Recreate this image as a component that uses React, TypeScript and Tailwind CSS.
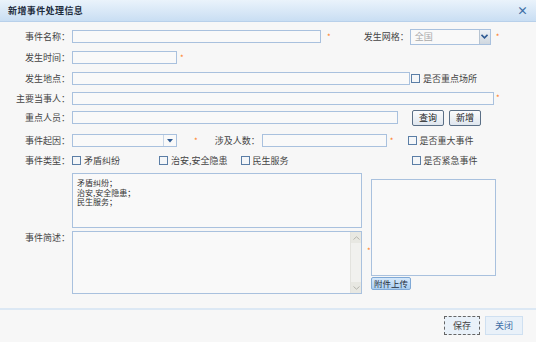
import React from 'react';

const font = { fontFamily: '"Noto Sans CJK SC", "Noto Sans", sans-serif' };

function Label({ text, w = 'w-[70px]' }: { text: string; w?: string }) {
  return <div className={`${w} shrink-0 whitespace-nowrap text-right text-[9px] leading-none text-[#444]`}>{text}</div>;
}

function Star({ className = '' }: { className?: string }) {
  return <span className={`text-[8px] leading-none text-[#ff7a1a] ${className}`}>*</span>;
}

function Box({ className = '' }: { className?: string }) {
  return <div className={`h-[13px] border border-[#a9c1de] bg-[#f9f9f9] ${className}`} />;
}

function Check({ text, className = '' }: { text: string; className?: string }) {
  return (
    <div className={`flex items-center ${className}`}>
      <span className="w-[9px] h-[9px] border border-[#5b7ea6] bg-[#f4f6f8]" />
      <span className="ml-[3px] whitespace-nowrap text-[9px] leading-none text-[#444]">{text}</span>
    </div>
  );
}

function Arrow() {
  return (
    <svg width="7" height="5" viewBox="0 0 7 5">
      <path d="M0.5 0.8 L3.5 3.8 L6.5 0.8" fill="none" stroke="#2f5b93" strokeWidth="1.6" />
    </svg>
  );
}

export default function App() {
  return (
    <div className="w-[536px] h-[342px] bg-[#f7f7f7] overflow-hidden" style={font}>
      {/* title bar */}
      <div className="h-[22px] flex items-center justify-between px-[8px] bg-gradient-to-b from-[#eaf3fb] to-[#c9def3] border-b border-[#b8d0ea]">
        <span className="text-[9px] font-bold text-[#1f2d3d] tracking-[0.4px]">新增事件处理信息</span>
        <span className="text-[11px] font-bold text-[#3d6da5] leading-none">×</span>
      </div>

      {/* row 1 */}
      <div className="h-[21px] mt-[4px] flex items-center">
        <Label text="事件名称：" />
        <Box className="ml-[2px] w-[249px]" />
        <Star className="ml-[6px]" />
        <Label text="发生网格：" w="w-[45px] ml-[33px]" />
        <div className="ml-[1px] w-[81px] h-[16px] flex border border-[#a9c1de] bg-[#f9f9f9]">
          <span className="flex-1 pl-[4px] text-[9px] leading-[14px] text-[#aaa]">全国</span>
          <span className="w-[11px] flex items-center justify-center bg-gradient-to-b from-[#eef2f6] to-[#cfd7df] border-l border-[#b7c4d2]">
            <Arrow />
          </span>
        </div>
        <Star className="ml-[5px]" />
      </div>

      {/* row 2 */}
      <div className="h-[21px] flex items-center">
        <Label text="发生时间：" />
        <Box className="ml-[2px] w-[105px]" />
        <Star className="ml-[3px]" />
      </div>

      {/* row 3 */}
      <div className="h-[20px] flex items-center">
        <Label text="发生地点：" />
        <Box className="ml-[2px] w-[338px]" />
        <Check text="是否重点场所" className="ml-[1px]" />
      </div>

      {/* row 4 */}
      <div className="h-[20px] flex items-center">
        <Label text="主要当事人：" />
        <Box className="ml-[2px] w-[422px]" />
        <Star className="ml-[2px]" />
      </div>

      {/* row 5 */}
      <div className="h-[19px] flex items-center">
        <Label text="重点人员：" />
        <Box className="ml-[2px] w-[326px]" />
        <button className="ml-[14px] w-[32px] h-[16px] rounded-[2px] border border-[#5b6f86] bg-gradient-to-b from-[#fbfcfd] to-[#dfe6ee] text-[9px] leading-none text-[#222]">查询</button>
        <button className="ml-[5px] w-[32px] h-[16px] rounded-[2px] border border-[#5b6f86] bg-gradient-to-b from-[#fbfcfd] to-[#dfe6ee] text-[9px] leading-none text-[#222]">新增</button>
      </div>

      {/* row 6 */}
      <div className="h-[27px] flex items-center">
        <Label text="事件起因：" />
        <div className="ml-[2px] w-[105px] h-[13px] flex border border-[#a9c1de] bg-[#f9f9f9]">
          <span className="flex-1" />
          <span className="w-[13px] flex items-center justify-center border-l border-[#c8d6e6]">
            <svg width="6" height="4" viewBox="0 0 6 4"><path d="M0 0 L6 0 L3 3.5 Z" fill="#2f5b93" /></svg>
          </span>
        </div>
        <Star className="ml-[17px]" />
        <Label text="涉及人数：" w="w-[45px] ml-[17px]" />
        <Box className="ml-[2px] w-[125px]" />
        <Star className="ml-[3px]" />
        <Check text="是否重大事件" className="ml-[14px]" />
      </div>

      {/* row 7 */}
      <div className="h-[12px] flex items-center">
        <Label text="事件类型：" />
        <Check text="矛盾纠纷" className="ml-[2px]" />
        <Check text="治安,安全隐患" className="ml-[39px]" />
        <Check text="民生服务" className="ml-[13px]" />
        <Check text="是否紧急事件" className="ml-[123px]" />
      </div>

      {/* text areas + attachment */}
      <div className="flex mt-[7px]">
        <div className="w-[70px] shrink-0 pt-[60px]">
          <Label text="事件简述：" />
        </div>
        <div className="ml-[2px] w-[290px] flex flex-col gap-[3px]">
          <div className="h-[55px] border border-[#a9c1de] bg-[#f9f9f9] pl-[4px] pt-[4px] text-[8px] leading-[9.5px] text-[#333]">
            <div>矛盾纠纷；</div>
            <div>治安,安全隐患；</div>
            <div>民生服务；</div>
          </div>
          <div className="h-[63px] border border-[#a9c1de] bg-[#f9f9f9] flex justify-end">
            <div className="w-[11px] flex flex-col justify-between bg-[#f1f1ee] border-l border-[#e3e3de]">
              <span className="h-[11px] flex items-center justify-center bg-[#e8e8e2]">
                <svg width="7" height="4" viewBox="0 0 7 4"><path d="M0.5 3.5 L3.5 0.8 L6.5 3.5" fill="none" stroke="#b5b5ad" strokeWidth="1" /></svg>
              </span>
              <span className="h-[11px] flex items-center justify-center bg-[#e8e8e2]">
                <svg width="7" height="4" viewBox="0 0 7 4"><path d="M0.5 0.5 L3.5 3.2 L6.5 0.5" fill="none" stroke="#b5b5ad" strokeWidth="1" /></svg>
              </span>
            </div>
          </div>
        </div>
        <div className="w-[9px] shrink-0 pt-[62px] pl-[5px]">
          <Star />
        </div>
        <div className="flex flex-col pt-[6px]">
          <div className="w-[125px] h-[97px] border border-[#a9c1de] bg-[#f9f9f9]" />
          <button className="mt-[1px] w-[40px] h-[13px] rounded-[2px] border border-[#80a9d6] bg-gradient-to-b from-[#d6e9fb] to-[#a9cdf0] text-[8.5px] leading-none text-[#1f2d3d]">附件上传</button>
        </div>
      </div>

      {/* footer */}
      <div className="mt-[14px] h-[2px] bg-[#dce8f4]" />
      <div className="flex justify-end pr-[13px] pt-[6px] gap-[5px]">
        <button className="w-[36px] h-[19px] border border-dashed border-[#666] bg-[#e9f1f9] text-[9px] leading-none text-[#444]">保存</button>
        <button className="w-[38px] h-[19px] border border-[#cfe0f1] bg-[#e9f1f9] text-[9px] leading-none text-[#3d6da5]">关闭</button>
      </div>
    </div>
  );
}
